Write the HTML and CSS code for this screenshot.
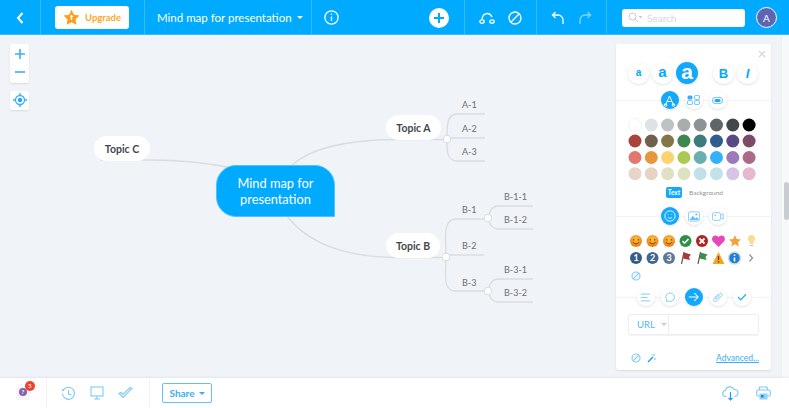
FILE: index.html
```html
<!DOCTYPE html>
<html lang="en">

<head>
    <meta charset="UTF-8">
    <title>Mind map for presentation</title>
    <link rel="stylesheet" href="styles.css">
</head>

<body>
    <header class="topbar">
        <div class="section back">
            <svg width="10" height="14" viewBox="0 0 10 14"><path d="M7.5 2 3 7l4.5 5" class="w-stroke thick" /></svg>
        </div>
        <div class="section upgrade-wrap">
            <button class="upgrade">
                <svg width="17" height="17" viewBox="0 0 17 17">
                    <path d="M8.5 .8 11 5.8l5.4.8-3.9 3.8.9 5.4-4.9-2.5-4.9 2.5.9-5.4L.6 6.6 6 5.8z" fill="#ff9d1c" />
                    <path d="M8.5 5.5 6.6 8h1.2v3h1.4V8h1.2z" fill="#fff" />
                </svg>
                <span>Upgrade</span>
            </button>
        </div>
        <div class="section title">Mind map for presentation<i class="caret"></i></div>
        <div class="section info-wrap">
            <svg width="15" height="15" viewBox="0 0 15 15">
                <circle cx="7.5" cy="7.5" r="6.6" class="w-stroke" />
                <path d="M7.5 6.5v4.5M7.5 3.6v1.3" class="w-stroke" />
            </svg>
            <div class="add">
                <svg width="12" height="12" viewBox="0 0 12 12"><path d="M6 1v10M1 6h10" stroke="#00aaff" stroke-width="2" /></svg>
            </div>
        </div>
        <div class="section tools">
            <svg width="16" height="12" viewBox="0 0 16 12">
                <ellipse cx="3" cy="9.5" rx="2.2" ry="1.7" class="w-stroke" />
                <ellipse cx="13" cy="9.5" rx="2.2" ry="1.7" class="w-stroke" />
                <path d="M3 7C3.5 3.5 6 1.5 8.5 1.5S12 3 13 5" class="w-stroke" />
            </svg>
            <svg width="14" height="14" viewBox="0 0 14 14">
                <circle cx="7" cy="7" r="6" class="w-stroke" />
                <path d="M3 11 11 3" class="w-stroke" />
            </svg>
        </div>
        <div class="section history">
            <svg width="14" height="14" viewBox="0 0 14 14"><path d="M4.5 1 1.5 4l3 3M1.5 4H7a5 5 0 0 1 5 5v4" class="w-stroke" /></svg>
            <svg width="14" height="14" viewBox="0 0 14 14" class="dim"><path d="M9.5 1l3 3-3 3M12.5 4H7a5 5 0 0 0-5 5v4" class="w-stroke" /></svg>
        </div>
        <div class="section search-wrap">
            <div class="search">
                <svg width="15" height="11" viewBox="0 0 15 11">
                    <circle cx="4.5" cy="4.500" r="3.500" fill="none" stroke="#c6ccd3" />
                    <path d="M7 7l3 3" stroke="#c6ccd3" />
                    <path d="M10.5 4h4L12.5 6.5z" fill="#c6ccd3" />
                </svg>
                <span>Search</span>
            </div>
            <div class="avatar">A</div>
        </div>
    </header>

    <main class="canvas">
        <svg class="links" width="789" height="343" viewBox="0 35 789 343">
            <g class="link">
                <path d="M100 160H150C180 160 208 163 232 168" />
                <path d="M291 166C310 148 345 140 395 139.500H447" />
                <path d="M287 216C305 240 340 257 395 257.500H446" />
                <path d="M447 139C447 125 447 114 457 114H485M447 138H485M447 139C447 152 447 161 457 161H485" />
                <path d="M446 257C446 240 442 219 456 219H488M446 255H484M446 257C446 275 442 291 456 291H488" />
                <path d="M488 218C490 210 492 206 499 206H533M488 218C490 225 492 229 499 229H533" />
                <path d="M488 291C490 283 492 279 499 279H533M488 291C490 298 492 302 499 302H533" />
            </g>
            <circle cx="447" cy="139" r="3.8" class="joint" />
            <circle cx="446" cy="257" r="3.8" class="joint" />
            <circle cx="488" cy="218" r="3.8" class="joint" />
            <circle cx="488" cy="291" r="3.8" class="joint" />
            <g class="leaf">
                <text x="462" y="108">A-1</text>
                <text x="462" y="132">A-2</text>
                <text x="462" y="155">A-3</text>
                <text x="462" y="213">B-1</text>
                <text x="462" y="249">B-2</text>
                <text x="462" y="286">B-3</text>
                <text x="504" y="200">B-1-1</text>
                <text x="504" y="223">B-1-2</text>
                <text x="504" y="273">B-3-1</text>
                <text x="504" y="296">B-3-2</text>
            </g>
        </svg>

        <div class="node root">Mind map for presentation</div>
        <div class="node topic topic-a">Topic A</div>
        <div class="node topic topic-b">Topic B</div>
        <div class="node topic topic-c">Topic C</div>

        <div class="zoom">
            <div class="zoom-box">
                <svg width="12" height="12" viewBox="0 0 12 12"><path d="M6 1v10M1 6h10" class="b-stroke mid" /></svg>
                <svg width="12" height="12" viewBox="0 0 12 12"><path d="M1 6h10" class="b-stroke mid" /></svg>
            </div>
            <div class="zoom-box single">
                <svg width="14" height="14" viewBox="0 0 14 14">
                    <circle cx="7" cy="7" r="4.5" class="b-stroke" />
                    <circle cx="7" cy="7" r="2.2" fill="#1ea7fd" />
                    <path d="M7 0v2.5M7 11.5V14M0 7h2.5M11.5 7H14" class="b-stroke" />
                </svg>
            </div>
        </div>

        <aside class="panel">
            <svg class="close" width="8" height="8" viewBox="0 0 8 8"><path d="M1 1l6 6M7 1 1 7" stroke="#d5dae0" stroke-width="1.3" /></svg>

            <div class="font-row">
                <span class="round fs-s">a</span>
                <span class="round fs-m">a</span>
                <span class="round fs-l on">a</span>
                <span class="round fs-b push">B</span>
                <span class="round fs-i">I</span>
            </div>

            <div class="tab-row first">
                <span class="round tab on">
                    <svg width="13" height="13" viewBox="0 0 13 13"><path d="M2.5 11 6.5 2 10.500 11M4.500 7.500h4" class="w-stroke thin" /><circle cx="2.5" cy="11" r="1.3" class="w-stroke thin" /><circle cx="10.5" cy="11" r="1.3" class="w-stroke thin" /></svg>
                </span>
                <span class="round tab">
                    <svg width="13" height="10" viewBox="0 0 13 10"><rect x=".5" y=".5" width="5" height="4" rx="1.5" fill="#37aefb" /><rect x="7.5" y=".5" width="5" height="4" rx="1.5" class="lb-stroke" /><rect x=".5" y="5.500" width="5" height="4" rx="1.5" class="lb-stroke" /><rect x="7.5" y="5.500" width="5" height="4" rx="1.5" class="lb-stroke" /></svg>
                </span>
                <span class="round tab">
                    <svg width="11" height="7" viewBox="0 0 11 7"><rect x=".5" y=".5" width="10" height="6" rx="3" class="lb-stroke" /><rect x="2.5" y="2" width="6" height="3" rx="1.5" fill="#1ea7fd" /></svg>
                </span>
            </div>

            <svg class="swatches" width="131" height="65" viewBox="0 0 131 65">
                <g>
                    <circle cx="8" cy="8" r="6.5" fill="#fff" stroke="#f0f1f3" />
                    <circle cx="24.3" cy="8" r="6.5" fill="#dfe2e5" />
                    <circle cx="40.6" cy="8" r="6.5" fill="#bfc2c4" />
                    <circle cx="56.9" cy="8" r="6.5" fill="#a9adae" />
                    <circle cx="73.2" cy="8" r="6.5" fill="#8e9294" />
                    <circle cx="89.5" cy="8" r="6.5" fill="#5f6467" />
                    <circle cx="105.8" cy="8" r="6.5" fill="#434749" />
                    <circle cx="122.1" cy="8" r="6.5" fill="#000" />
                </g>
                <g>
                    <circle cx="8" cy="24" r="6.5" fill="#a8443c" />
                    <circle cx="24.3" cy="24" r="6.5" fill="#72604e" />
                    <circle cx="40.6" cy="24" r="6.5" fill="#857646" />
                    <circle cx="56.9" cy="24" r="6.5" fill="#40874f" />
                    <circle cx="73.2" cy="24" r="6.5" fill="#3e7b7d" />
                    <circle cx="89.5" cy="24" r="6.5" fill="#2f5d8c" />
                    <circle cx="105.8" cy="24" r="6.5" fill="#5b4984" />
                    <circle cx="122.1" cy="24" r="6.5" fill="#7f4a66" />
                </g>
                <g>
                    <circle cx="8" cy="40.5" r="6.5" fill="#e2776b" />
                    <circle cx="24.3" cy="40.5" r="6.5" fill="#e8963e" />
                    <circle cx="40.6" cy="40.5" r="6.5" fill="#fcd36f" />
                    <circle cx="56.9" cy="40.5" r="6.5" fill="#acc955" />
                    <circle cx="73.2" cy="40.5" r="6.5" fill="#68b0ae" />
                    <circle cx="89.5" cy="40.5" r="6.5" fill="#33b1fd" />
                    <circle cx="105.8" cy="40.5" r="6.5" fill="#9a7ab8" />
                    <circle cx="122.1" cy="40.5" r="6.5" fill="#ac6a8b" />
                </g>
                <g>
                    <circle cx="8" cy="56.7" r="6.5" fill="#e8d4c8" />
                    <circle cx="24.3" cy="56.7" r="6.5" fill="#e8d2c6" />
                    <circle cx="40.6" cy="56.7" r="6.5" fill="#dfe1c2" />
                    <circle cx="56.9" cy="56.7" r="6.5" fill="#dfe2c0" />
                    <circle cx="73.2" cy="56.7" r="6.5" fill="#c2e0e8" />
                    <circle cx="89.5" cy="56.7" r="6.5" fill="#c2e2ea" />
                    <circle cx="105.8" cy="56.7" r="6.5" fill="#d6c4e6" />
                    <circle cx="122.1" cy="56.7" r="6.5" fill="#e6b8cf" />
                </g>
            </svg>

            <div class="switch">
                <span class="pill">Text</span>
                <span>Background</span>
            </div>

            <div class="tab-row second">
                <span class="round tab on">
                    <svg width="12" height="12" viewBox="0 0 14 14"><circle cx="7" cy="7" r="6" class="w-stroke thin" /><path d="M4.5 8.5c1.5 1.500 3.500 1.500 5 0M5 5v.8M9 5v.8" class="w-stroke thin" /></svg>
                </span>
                <span class="round tab">
                    <svg width="12" height="11" viewBox="0 0 15 13"><rect x=".7" y=".7" width="13.6" height="11.6" rx="1.5" class="lb-stroke" /><path d="M2 11 6 5.500l3 3.500 2-2 3 4z" fill="#62c0fb" /><circle cx="10.5" cy="4" r="1.3" fill="#62c0fb" /></svg>
                </span>
                <span class="round tab">
                    <svg width="12" height="9" viewBox="0 0 15 11"><rect x=".7" y=".7" width="10" height="9.6" rx="2" class="lb-stroke" /><path d="M11 4l3-2v7l-3-2" class="lb-stroke" /><circle cx="4" cy="4" r="1" fill="#62c0fb" /></svg>
                </span>
            </div>

            <svg class="marks" width="131" height="32" viewBox="0 0 131 32">
                <defs>
                    <radialGradient id="smile" cx=".5" cy=".35" r=".7"><stop offset="0" stop-color="#ffc23c" /><stop offset="1" stop-color="#e8750f" /></radialGradient>
                    <g id="face">
                        <circle r="6" fill="url(#smile)" />
                        <path d="M-3 1c1.500 2.500 4.500 2.500 6 0" fill="none" stroke="#7a3b08" />
                        <path d="M-2.200-2v1.500M2.200-2v1.500" stroke="#7a3b08" />
                    </g>
                </defs>
                <use href="#face" x="8" y="8" />
                <use href="#face" x="24.5" y="8" />
                <use href="#face" x="41" y="8" />
                <g transform="translate(57.5 8)">
                    <circle r="6" fill="#2f8f46" />
                    <path d="M-3 0-1 2.200 3-2" fill="none" stroke="#fff" stroke-width="1.6" />
                </g>
                <g transform="translate(74 8)">
                    <circle r="6" fill="#b32222" />
                    <path d="M-2.500-2.500l5 5M2.500-2.500l-5 5" stroke="#fff" stroke-width="1.8" />
                </g>
                <path d="M90.5 14 85 8.500C83 6 84.500 2.500 87.500 2.500c1.300 0 2.400.7 3 1.800.6-1.100 1.700-1.800 3-1.800 3 0 4.500 3.500 2.500 6z" fill="#e848b5" />
                <path d="M107 2l1.800 4 4.200.5-3.100 2.800.9 4.200-3.800-2.200-3.800 2.200.9-4.200L101 6.500l4.200-.5z" fill="#f2a33c" />
                <path d="M123.5 2a3.500 3.500 0 0 0-2 6.400V11h4V8.400a3.500 3.500 0 0 0-2-6.400z" fill="#fbdc8e" />
                <path d="M122 12.5h3" stroke="#b9bdc1" />

                <g class="num">
                    <circle cx="8" cy="25" r="6" fill="#345e88" /><text x="8" y="28">1</text>
                    <circle cx="24.5" cy="25" r="6" fill="#43678f" /><text x="24.5" y="28">2</text>
                    <circle cx="41" cy="25" r="6" fill="#5b7896" /><text x="41" y="28">3</text>
                </g>
                <path d="M53.5 31 56 19" stroke="#555" stroke-width="1.2" />
                <path d="M56 19.500l7 2-2 2.500 1 3-7-1.500z" fill="#a8383a" />
                <path d="M70 31 72.500 19" stroke="#555" stroke-width="1.2" />
                <path d="M72.5 19.500l7 2-2 2.500 1 3-7-1.500z" fill="#3b8d4e" />
                <path d="M90.5 19 96.500 31h-12z" fill="#f5a524" />
                <path d="M90.5 23v4M90.500 28v1.500" stroke="#5a3a05" stroke-width="1.2" />
                <circle cx="106.5" cy="25" r="6" fill="#1b80d8" stroke="#d3dbe2" stroke-width="1.5" />
                <path d="M106.5 24.500v4M106.500 21.500v1.500" stroke="#fff" stroke-width="1.6" />
                <path d="M121.5 21.500l3 3.500-3 3.500" fill="none" stroke="#8d9296" stroke-width="1.2" />
            </svg>

            <svg class="ban" width="10" height="10" viewBox="0 0 10 10"><circle cx="5" cy="5" r="4" class="lb-stroke" /><path d="M2.2 7.800l5.600-5.600" class="lb-stroke" /></svg>

            <div class="tab-row third">
                <span class="round tab">
                    <svg width="11" height="9" viewBox="0 0 13 10"><path d="M1 1h11M1 5h8M1 9h11" class="lb-stroke" /></svg>
                </span>
                <span class="round tab">
                    <svg width="11" height="11" viewBox="0 0 13 13"><path d="M3 11.500 3.500 9.500A5 5 0 1 1 6 11a5 5 0 0 1-1.200-.2z" class="lb-stroke" /></svg>
                </span>
                <span class="round tab on">
                    <svg width="11" height="10" viewBox="0 0 14 12"><path d="M1 6h12M8 1l5 5-5 5" class="w-stroke" /></svg>
                </span>
                <span class="round tab">
                    <svg width="11" height="11" viewBox="0 0 13 13"><path d="M7.5 2.500 2.500 7.500a2 2 0 0 0 3 3l6-6A1.500 1.500 0 0 0 9 2L4 7a.8.8 0 0 0 1.200 1.200L9.500 4" class="lb-stroke" /></svg>
                </span>
                <span class="round tab">
                    <svg width="10" height="8" viewBox="0 0 12 10"><path d="M1 5l3.500 3.500L11 1.500" class="b-stroke mid" /></svg>
                </span>
            </div>

            <div class="url">
                <span class="url-type">URL<i class="caret grey"></i></span>
                <span class="url-input"></span>
            </div>

            <div class="panel-foot">
                <svg width="10" height="10" viewBox="0 0 10 10"><circle cx="5" cy="5" r="4" class="lb-stroke" /><path d="M2.2 7.800l5.600-5.600" class="lb-stroke" /></svg>
                <svg width="10" height="10" viewBox="0 0 10 10"><path d="M1 9 6 4" stroke="#1e9cf0" stroke-width="1.5" /><path d="M7 1v2M8 5v2M5 1.500v1" stroke="#62c0fb" /></svg>
                <a class="advanced">Advanced...</a>
            </div>
        </aside>

        <div class="scroll"><i class="thumb"></i></div>
    </main>

    <footer class="bottombar">
        <div class="foot-help">
            <span class="help-box"><span class="help">?</span></span>
            <span class="badge">5</span>
        </div>
        <div class="foot-tools">
            <svg width="15" height="15" viewBox="0 0 15 15"><path d="M2.5 4A6 6 0 1 1 1.500 7.500" class="lb-stroke" /><path d="M7.5 4v4l3 1" class="lb-stroke" /><circle cx="2" cy="4" r="1" fill="#62c0fb" /></svg>
            <svg width="14" height="14" viewBox="0 0 14 14"><rect x="1" y="1" width="12" height="9" class="lb-stroke" /><path d="M7 10v2.500M4 13h6" class="lb-stroke" /></svg>
            <svg width="15" height="12" viewBox="0 0 15 12"><path d="M1 6.500 5 10.500 14 1.500l-2-1L5 7.500 3 5.500z" class="lb-stroke" /></svg>
        </div>
        <button class="share">Share<i class="caret blue"></i></button>
        <div class="foot-right">
            <svg width="17" height="15" viewBox="0 0 17 15"><path d="M4.5 10.500H4a3 3 0 0 1-.5-6A4.500 4.500 0 0 1 12 3.500a3.500 3.500 0 0 1 1 7h-.5" class="lb-stroke" /><path d="M8.5 6v8M6.500 12l2 2 2-2" stroke="#1e9cf0" fill="none" stroke-width="1.2" /></svg>
            <svg width="15" height="14" viewBox="0 0 15 14"><path d="M3.5 4V1h7l1 1v2" class="lb-stroke" /><rect x=".7" y="4" width="13.6" height="6" rx="1.5" class="lb-stroke" /><rect x="3.5" y="7.500" width="8" height="6" fill="#8fd2fb" /><rect x="5" y="9" width="2.5" height="2.5" fill="#1e86d8" /></svg>
        </div>
    </footer>
</body>

</html>
```

FILE: styles.css
```css
:root {
    --blue: #00aaff;
    --bg: #f0f3f8;
    --line: #d9dde0;
    --ink: #43484d;
    --soft: #62c0fb;
}

* {
    box-sizing: border-box;
}

body {
    margin: 0;
    width: 789px;
    height: 408px;
    overflow: hidden;
    display: flex;
    flex-direction: column;
    font-family: 'Lato', 'Open Sans', sans-serif;
    color: var(--ink);
    background-color: var(--bg);
}

svg {
    display: block;
    flex: none;
}

i {
    display: block;
}

.w-stroke,
.b-stroke,
.lb-stroke {
    fill: none;
    stroke-width: 1.3;
}

.w-stroke {
    stroke: #fff;
}

.b-stroke {
    stroke: #37aefb;
}

.lb-stroke {
    stroke: #7ccaf9;
    stroke-width: 1.1;
}

.thin {
    stroke-width: 1;
}

.mid {
    stroke-width: 1.6;
}

.thick {
    stroke-width: 2;
}

.caret {
    width: 0;
    height: 0;
    border-left: 3px solid transparent;
    border-right: 3px solid transparent;
    border-top: 3px solid #fff;
}

.caret.grey {
    border-top-color: #c9ced3;
}

.caret.blue {
    border-top-color: #37aefb;
}

/* top bar */
.topbar {
    height: 35px;
    flex: none;
    display: flex;
    background-color: var(--blue);
    box-shadow: inset 0 -1px 0 #33bbff;
}

.section {
    display: flex;
    align-items: center;
    border-right: 1px solid #33bbff;
}

.back {
    width: 41px;
    justify-content: center;
}

.upgrade-wrap {
    width: 104px;
    padding-left: 14px;
}

.upgrade {
    width: 74px;
    height: 23px;
    padding: 0 0 0 8px;
    display: flex;
    align-items: center;
    gap: 5px;
    border: none;
    border-radius: 3px;
    background-color: #fff;
    color: #ffa81f;
    font-family: inherit;
    font-size: 9.5px;
    font-weight: 700;
}

.title {
    width: 167px;
    padding-left: 12px;
    gap: 5px;
    color: #fff;
    font-size: 11.5px;
    white-space: nowrap;
}

.info-wrap {
    width: 153px;
    padding-left: 12px;
    justify-content: space-between;
    padding-right: 15px;
}

.add {
    width: 20px;
    height: 20px;
    border-radius: 50%;
    background-color: #fff;
    display: flex;
    align-items: center;
    justify-content: center;
}

.tools {
    width: 72px;
    padding: 0 14px;
    justify-content: space-between;
}

.history {
    width: 70px;
    padding: 0 14px;
    justify-content: space-between;
}

.dim {
    opacity: 0.5;
}

.search-wrap {
    flex: 1;
    border-right: none;
    padding-left: 15px;
    gap: 11px;
}

.search {
    width: 123px;
    height: 18px;
    padding-left: 6px;
    display: flex;
    align-items: center;
    gap: 4px;
    background-color: #fff;
    border-radius: 3px;
    color: #d3d7dc;
    font-size: 10px;
}

.avatar {
    width: 21px;
    height: 21px;
    border: 1px solid #fff;
    border-radius: 50%;
    background-color: #5c66b3;
    color: #fff;
    font-size: 10px;
    display: flex;
    align-items: center;
    justify-content: center;
}

/* map */
.canvas {
    flex: 1;
    position: relative;
    background-color: var(--bg);
}

.links {
    position: absolute;
    left: 0;
    top: 0;
}

.link path {
    fill: none;
    stroke: var(--line);
    stroke-width: 1.3;
}

.joint {
    fill: #fff;
    stroke: var(--line);
}

.leaf text {
    font-size: 9px;
    fill: #6b7075;
}

.node {
    position: absolute;
    display: flex;
    align-items: center;
    justify-content: center;
}

.root {
    left: 216px;
    top: 130px;
    width: 119px;
    height: 52px;
    padding: 0 18px;
    text-align: center;
    line-height: 16px;
    font-size: 12.8px;
    color: #fff;
    background-color: var(--blue);
    border: 1px solid #4cc3ff;
    border-radius: 20px 20px 0 20px;
}

.topic {
    height: 25px;
    border-radius: 13px;
    background-color: #fff;
    font-size: 10.5px;
    font-weight: 700;
}

.topic-a {
    left: 386px;
    top: 80px;
    width: 55px;
}

.topic-b {
    left: 386px;
    top: 198px;
    width: 54px;
}

.topic-c {
    left: 94px;
    top: 101px;
    width: 56px;
}

.zoom {
    position: absolute;
    left: 10px;
    top: 9px;
    display: flex;
    flex-direction: column;
    gap: 8px;
}

.zoom-box {
    width: 19px;
    height: 39px;
    padding: 4px 0 5px;
    display: flex;
    flex-direction: column;
    align-items: center;
    justify-content: space-between;
    background-color: #fff;
    border-radius: 2px;
    box-shadow: 0 1px 2px rgba(0, 0, 0, 0.1);
}

.zoom-box.single {
    height: 19px;
    padding: 2px 0;
}

/* format panel */
.panel {
    position: absolute;
    left: 616px;
    top: 9px;
    width: 155px;
    height: 326px;
    padding: 18px 12px 0 12px;
    display: flex;
    flex-direction: column;
    background-color: #fff;
    border-radius: 3px;
    box-shadow: 0 1px 2px rgba(0, 0, 0, 0.1);
}

.close {
    position: absolute;
    top: 6px;
    right: 5px;
}

.round {
    border-radius: 50%;
    background-color: #fff;
    color: var(--blue);
    box-shadow: 0 1px 3px rgba(0, 0, 0, 0.12);
    display: flex;
    align-items: center;
    justify-content: center;
    flex: none;
}

.round.on {
    background-color: #12a8fb;
    color: #fff;
}

.font-row {
    display: flex;
    align-items: center;
    gap: 3px;
    font-family: 'Liberation Sans', sans-serif;
    font-weight: 700;
}

.font-row .round {
    width: 21px;
    height: 21px;
}

.fs-s {
    font-size: 10px;
    padding-bottom: 2px;
}

.fs-m {
    font-size: 15px;
    padding-bottom: 3px;
}

.font-row .fs-l {
    width: 22px;
    height: 22px;
    font-size: 21px;
    padding-bottom: 3px;
}

.fs-b {
    font-size: 13px;
}

.font-row .push {
    margin-left: 12px;
}

.fs-i {
    font-size: 13px;
    font-style: italic;
}

.tab-row {
    display: flex;
    justify-content: center;
    gap: 6px;
    margin: 0 -12px;
    position: relative;
}

.tab-row::before {
    content: '';
    position: absolute;
    left: 0;
    right: 0;
    top: 9px;
    height: 1px;
    background-color: #f1f3f5;
}

.tab {
    width: 18px;
    height: 18px;
    position: relative;
}

.first {
    margin-top: 7px;
}

.swatches {
    margin-top: 8px;
    margin-left: -1px;
}

.switch {
    margin-top: 5px;
    height: 10px;
    padding-left: 38px;
    display: flex;
    align-items: center;
    gap: 7px;
    font-size: 6.5px;
    color: #8f959b;
}

.pill {
    width: 16px;
    height: 11px;
    border-radius: 2px;
    background-color: #12a8fb;
    color: #fff;
    font-weight: 700;
    display: flex;
    align-items: center;
    justify-content: center;
}

.second {
    margin-top: 10px;
}

.marks {
    margin-top: 8px;
}

.num text {
    font-size: 9px;
    font-weight: 700;
    fill: #fff;
    text-anchor: middle;
}

.ban {
    margin-top: 6px;
    margin-left: 3px;
}

.third {
    margin-top: 7px;
}

.url {
    margin-top: 8px;
    height: 21px;
    display: flex;
    border: 1px solid #eceff2;
    border-radius: 3px;
    box-shadow: 0 1px 1px rgba(0, 0, 0, 0.05);
}

.url-type {
    width: 40px;
    padding-left: 8px;
    display: flex;
    align-items: center;
    gap: 6px;
    border-right: 1px solid #eceff2;
    font-size: 9.5px;
    color: #4eb8fb;
}

.panel-foot {
    margin-top: 18px;
    margin-left: 3px;
    display: flex;
    align-items: center;
    gap: 6px;
}

.advanced {
    margin-left: auto;
    font-size: 8.5px;
    color: #37aefb;
    text-decoration: underline;
}

.scroll {
    position: absolute;
    right: 0;
    top: 0;
    bottom: 0;
    width: 8px;
    background-color: #f6f8fa;
    border-left: 1px solid #eef0f3;
}

.thumb {
    position: absolute;
    top: 147px;
    left: 2px;
    width: 5px;
    height: 38px;
    border-radius: 3px;
    background-color: #c9cdd1;
}

/* bottom bar */
.bottombar {
    height: 30px;
    flex: none;
    display: flex;
    align-items: center;
    background-color: #fff;
    box-shadow: 0 -1px 2px rgba(0, 0, 0, 0.06);
    position: relative;
}

.foot-help {
    width: 47px;
    height: 100%;
    position: relative;
    border-right: 1px solid #f1f3f5;
}

.help-box {
    position: absolute;
    left: 16px;
    top: 9px;
    width: 14px;
    height: 13px;
    border-radius: 2px;
    background-color: #f4f5f8;
}

.help {
    position: absolute;
    left: 3px;
    top: 1px;
    width: 8px;
    height: 8px;
    border-radius: 50%;
    background-color: #8a5fa8;
    color: #fff;
    font-size: 6px;
    font-weight: 700;
    text-align: center;
    line-height: 8px;
}

.badge {
    position: absolute;
    left: 25px;
    top: 3px;
    width: 10px;
    height: 10px;
    border-radius: 50%;
    background-color: #f0412c;
    color: #fff;
    font-size: 6.5px;
    text-align: center;
    line-height: 10px;
}

.foot-tools {
    width: 103px;
    height: 100%;
    padding: 0 16px 0 14px;
    display: flex;
    align-items: center;
    justify-content: space-between;
    border-right: 1px solid #f1f3f5;
}

.share {
    margin-left: 12px;
    width: 50px;
    height: 20px;
    padding: 0;
    display: flex;
    align-items: center;
    justify-content: center;
    gap: 4px;
    background-color: #fff;
    border: 1px solid #62c0fb;
    border-radius: 2px;
    color: #37aefb;
    font-family: inherit;
    font-size: 10px;
    font-weight: 700;
}

.foot-right {
    margin-left: auto;
    width: 49px;
    margin-right: 18px;
    display: flex;
    justify-content: space-between;
    align-items: center;
}
```
